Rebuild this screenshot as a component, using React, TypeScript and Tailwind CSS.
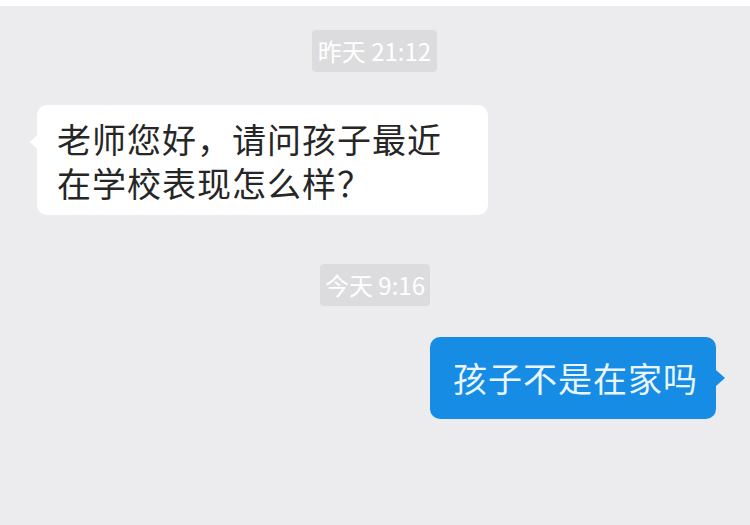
const cjk = { fontFamily: '"Noto Sans CJK SC", "Noto Sans", sans-serif' };

function Stamp({ text, w }: { text: string; w: string }) {
  return (
    <div className="flex justify-center">
      <div className={`${w} h-[42px] rounded-[4px] bg-[#dcdcde] text-white text-[24px] flex items-center justify-center`}>
        {text}
      </div>
    </div>
  );
}

export default function App() {
  return (
    <div className="w-[750px] h-[525px] overflow-hidden bg-[#ececee] flex flex-col" style={cjk}>
      <div className="h-[6px] bg-white shrink-0" />

      {/* 昨天 */}
      <div className="mt-[24px] ml-[-1px]">
        <Stamp text="昨天 21:12" w="w-[125px]" />
      </div>

      {/* incoming */}
      <div className="mt-[33px] pl-[37px] flex">
        <div className="relative w-[451px] rounded-[10px] bg-white pl-[20px] pt-[12px] pb-[10px] text-[34px] leading-[44px] tracking-[1px] text-[#262626]">
          <span className="absolute left-[-7px] top-[30px] w-0 h-0 border-y-[7px] border-y-transparent border-r-[7px] border-r-white" />
          <div>老师您好，请问孩子最近</div>
          <div>在学校表现怎么样？</div>
        </div>
      </div>

      {/* 今天 */}
      <div className="mt-[49px]">
        <Stamp text="今天 9:16" w="w-[110px]" />
      </div>

      {/* outgoing */}
      <div className="mt-[31px] pr-[34px] flex justify-end">
        <div className="relative w-[286px] h-[82px] rounded-[10px] bg-[#168ce4] pl-[23px] flex items-center text-[34px] leading-[44px] tracking-[1px] text-[#eaf6ff]">
          <span className="absolute right-[-9px] top-[33px] w-0 h-0 border-y-[8px] border-y-transparent border-l-[9px] border-l-[#168ce4]" />
          孩子不是在家吗
        </div>
      </div>
    </div>
  );
}
